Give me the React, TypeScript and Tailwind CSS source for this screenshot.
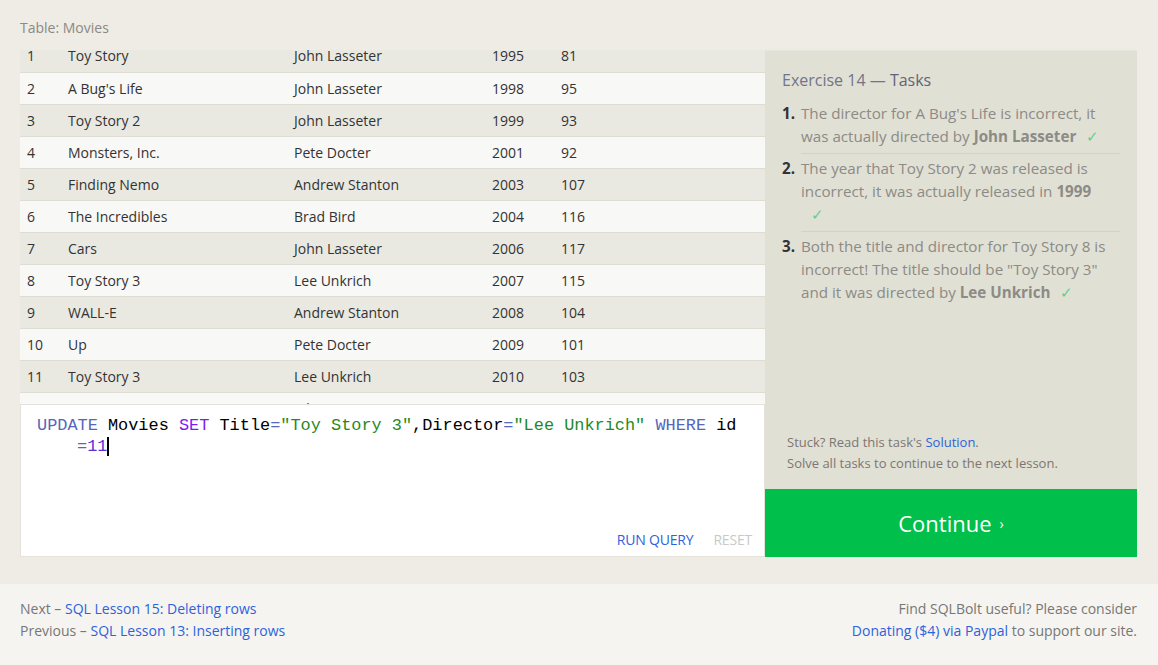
import React from "react";

interface Movie {
  id: number;
  title: string;
  director: string;
  year: number;
  length: number;
}

const movies: Movie[] = [
  { id: 1, title: "Toy Story", director: "John Lasseter", year: 1995, length: 81 },
  { id: 2, title: "A Bug's Life", director: "John Lasseter", year: 1998, length: 95 },
  { id: 3, title: "Toy Story 2", director: "John Lasseter", year: 1999, length: 93 },
  { id: 4, title: "Monsters, Inc.", director: "Pete Docter", year: 2001, length: 92 },
  { id: 5, title: "Finding Nemo", director: "Andrew Stanton", year: 2003, length: 107 },
  { id: 6, title: "The Incredibles", director: "Brad Bird", year: 2004, length: 116 },
  { id: 7, title: "Cars", director: "John Lasseter", year: 2006, length: 117 },
  { id: 8, title: "Toy Story 3", director: "Lee Unkrich", year: 2007, length: 115 },
  { id: 9, title: "WALL-E", director: "Andrew Stanton", year: 2008, length: 104 },
  { id: 10, title: "Up", director: "Pete Docter", year: 2009, length: 101 },
  { id: 11, title: "Toy Story 3", director: "Lee Unkrich", year: 2010, length: 103 },
  { id: 12, title: "Cars 2", director: "John Lasseter", year: 2011, length: 120 },
];

const Check = () => <span className="ml-[10px] text-[#5fd18c]">✓</span>;

function App() {
  return (
    <div className="min-h-screen bg-[#efece5] font-['Open_Sans',sans-serif] text-[#333]">
      <div className="px-[20px] pt-[18px] pb-[27px]">
        <div className="text-[14px] leading-[20px] text-[#8a8984] mb-[12px]">Table: Movies</div>
        <div className="flex">
          {/* left: table (scrolled a bit) + query editor */}
          <div className="w-[745px]">
            <div className="h-[354px] overflow-hidden">
              <table className="w-full -mt-[10px] text-[14px] border-collapse">
                <tbody>
                  {movies.map((m) => (
                    <tr
                      key={m.id}
                      className={`h-[32px] border-b border-[#dedcd3] ${m.id % 2 === 1 ? "bg-[#eae9e1]" : "bg-[#f8f8f6]"}`}
                    >
                      <td className="w-[48px] pl-[7px]">{m.id}</td>
                      <td className="w-[226px]">{m.title}</td>
                      <td className="w-[198px]">{m.director}</td>
                      <td className="w-[69px]">{m.year}</td>
                      <td>{m.length}</td>
                    </tr>
                  ))}
                </tbody>
              </table>
            </div>
            <div className="h-[153px] bg-white border border-[#e4e2da] flex flex-col">
              <div className="flex-1 pl-[16px] pt-[10px] font-['Liberation_Mono',monospace] text-[16.9px] leading-[21px] text-black">
                <div className="whitespace-pre">
                  <span className="text-[#5566bb]">UPDATE</span> Movies <span className="text-[#7a1cf5]">SET</span> Title
                  <span className="text-[#5566bb]">=</span>
                  <span className="text-[#1f8a1f]">"Toy Story 3"</span>,Director
                  <span className="text-[#5566bb]">=</span>
                  <span className="text-[#1f8a1f]">"Lee Unkrich"</span> <span className="text-[#5566bb]">WHERE</span> id
                </div>
                <div className="pl-[40px] flex items-center">
                  <span className="text-[#5566bb]">=</span>
                  <span className="text-[#5a2fd6]">11</span>
                  <span className="w-[2px] h-[19px] bg-black" />
                </div>
              </div>
              <div className="flex justify-end gap-[20px] pr-[12px] pb-[7px] text-[14px] leading-[18px] tracking-[-0.2px]">
                <span className="text-[#2d62dc]">RUN QUERY</span>
                <span className="text-[#c9c9c9]">RESET</span>
              </div>
            </div>
          </div>
          {/* right: tasks panel */}
          <div className="w-[372px] flex flex-col">
            <div className="h-[439px] bg-[#e1e0d5] border-t border-[#e6e5dc] flex flex-col justify-between px-[17px]">
              <div>
                <div className="pt-[19px] text-[16px] leading-[20px] text-[#70758a]">
                  Exercise 14 — <span className="text-[#5f6478]">Tasks</span>
                </div>
                <ol className="mt-[12px] text-[15.2px] leading-[23px] text-[#8c8b85]">
                  <li className="flex">
                    <span className="w-[19px] shrink-0 font-bold text-[#333]">1.</span>
                    <div className="flex-1 pb-[5px] border-b border-[#d3d2c7]">
                      The director for A Bug's Life is incorrect, it
                      <br />
                      was actually directed by <b>John Lasseter</b>
                      <Check />
                    </div>
                  </li>
                  <li className="flex pt-[3px]">
                    <span className="w-[19px] shrink-0 font-bold text-[#333]">2.</span>
                    <div className="flex-1 pb-[5px] border-b border-[#d3d2c7]">
                      The year that Toy Story 2 was released is
                      <br />
                      incorrect, it was actually released in <b>1999</b>
                      <br />
                      <Check />
                    </div>
                  </li>
                  <li className="flex pt-[3px]">
                    <span className="w-[19px] shrink-0 font-bold text-[#333]">3.</span>
                    <div className="flex-1">
                      Both the title and director for Toy Story 8 is
                      <br />
                      incorrect! The title should be "Toy Story 3"
                      <br />
                      and it was directed by <b>Lee Unkrich</b>
                      <Check />
                    </div>
                  </li>
                </ol>
              </div>
              <div className="pb-[15px] px-[5px] text-[13px] leading-[21px] text-[#7d7672]">
                <div>
                  Stuck? Read this task's <span className="text-[#2d62dc]">Solution</span>.
                </div>
                <div>Solve all tasks to continue to the next lesson.</div>
              </div>
            </div>
            <div className="h-[68px] bg-[#00bf4a] flex items-center justify-center text-white text-[22px]">
              Continue <span className="ml-[8px] text-[14px]">›</span>
            </div>
          </div>
        </div>
      </div>
      <div className="bg-[#f5f4f0] h-[81px] px-[20px] pt-[14px] pr-[21px] flex justify-between text-[14px] leading-[22px] text-[#777]">
        <div>
          <div>
            Next – <span className="text-[#2d62dc]">SQL Lesson 15: Deleting rows</span>
          </div>
          <div>
            Previous – <span className="text-[#2d62dc]">SQL Lesson 13: Inserting rows</span>
          </div>
        </div>
        <div className="text-right">
          <div>Find SQLBolt useful? Please consider</div>
          <div>
            <span className="text-[#2d62dc]">Donating ($4) via Paypal</span> to support our site.
          </div>
        </div>
      </div>
    </div>
  );
}

export default App;
